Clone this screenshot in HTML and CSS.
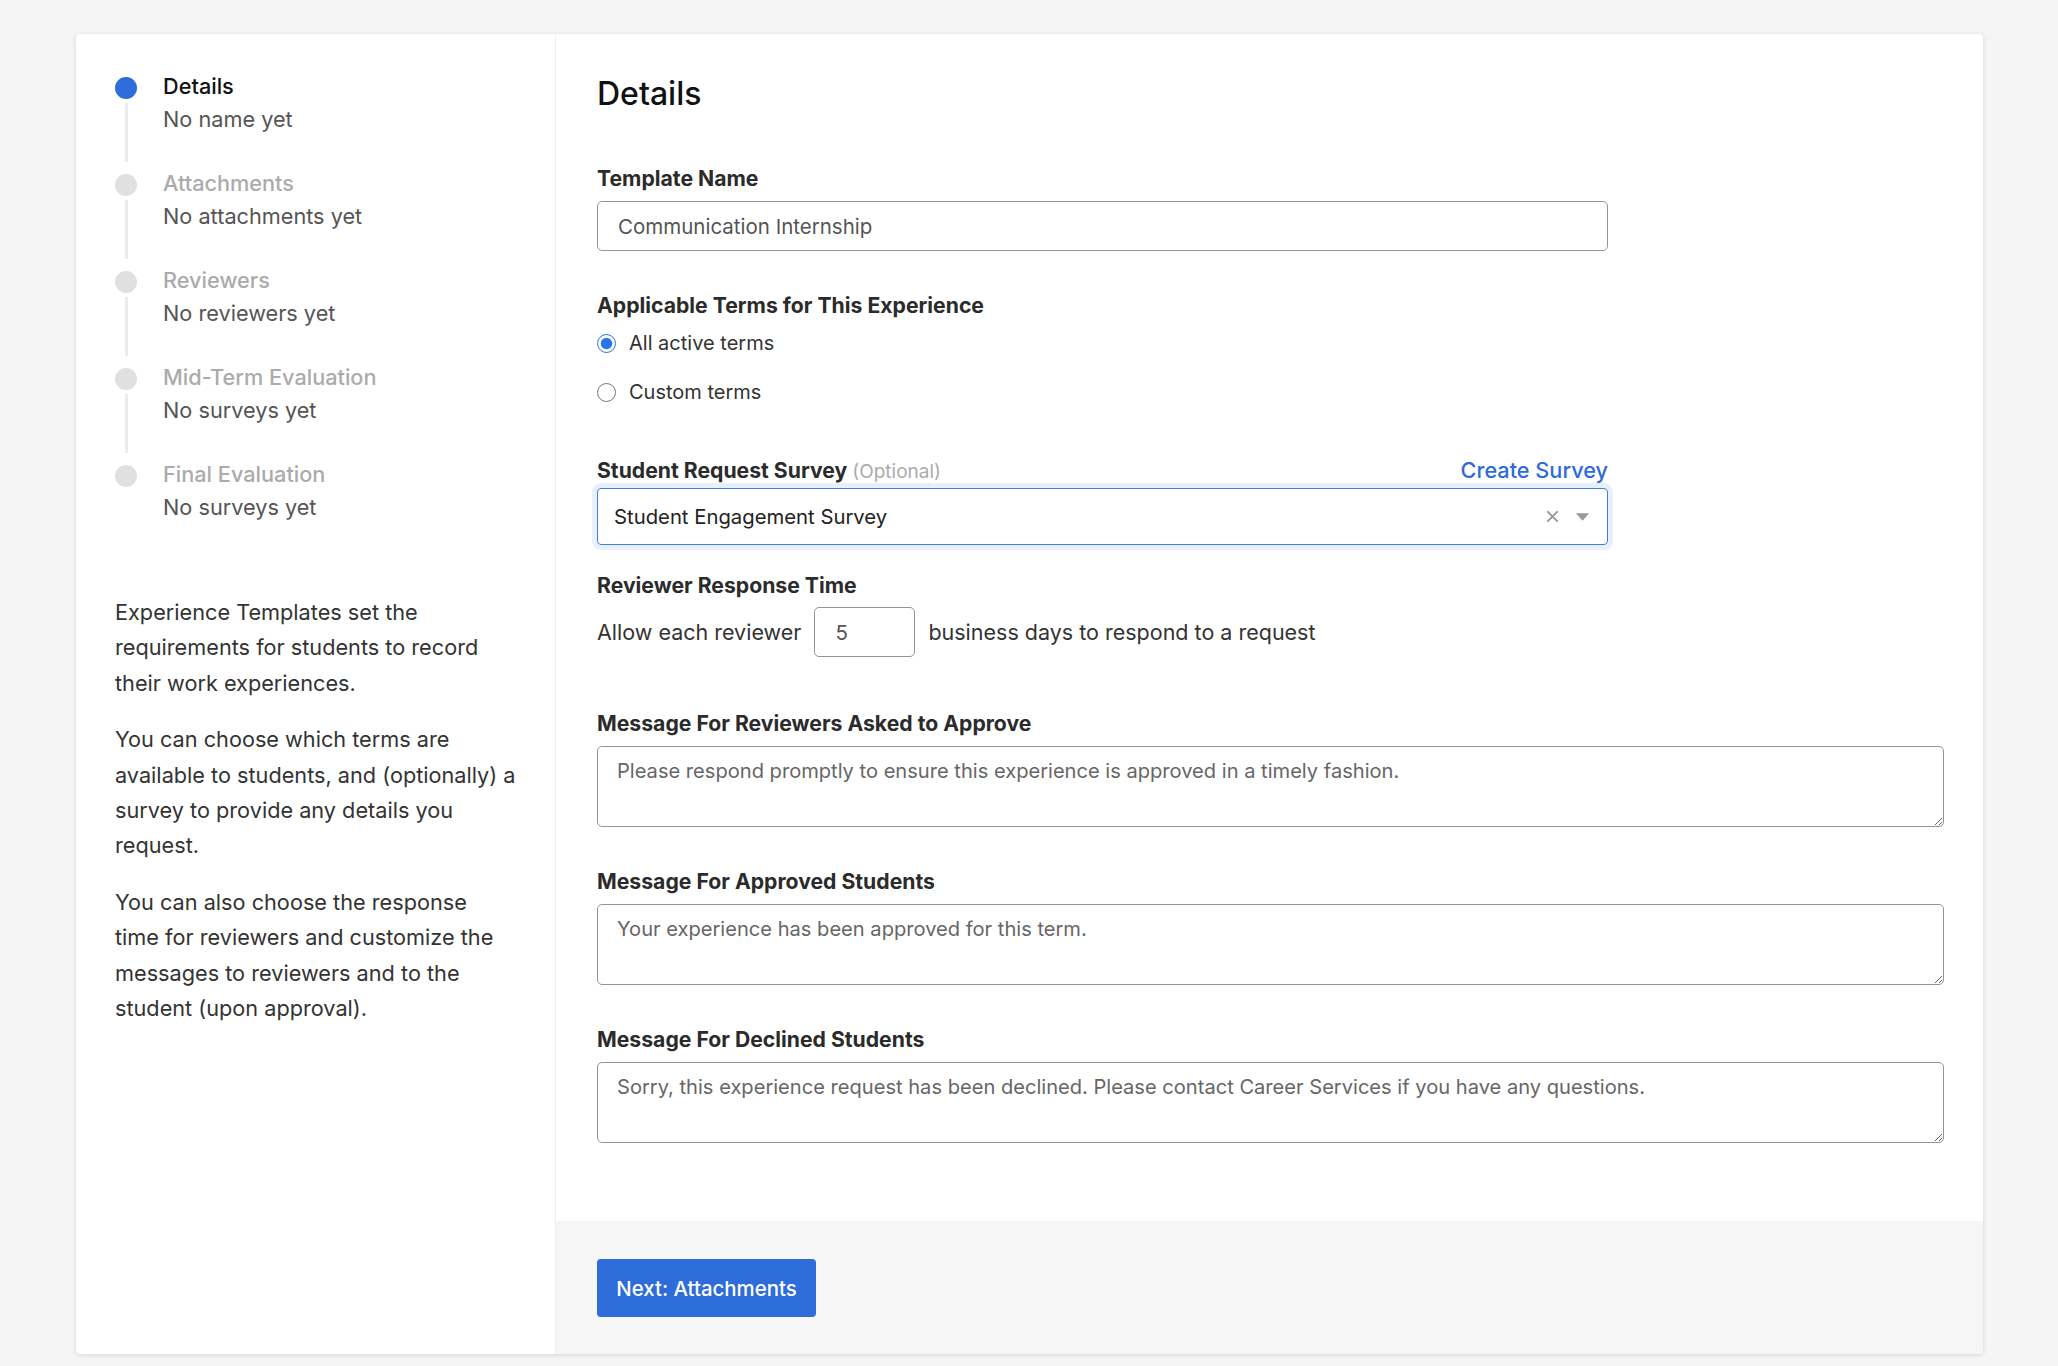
FILE: index.html
```html
<!DOCTYPE html>
<html lang="en">
<head>
<meta charset="utf-8">
<title>Experience Template – Details</title>
<link rel="stylesheet" href="styles.css">
</head>
<body>
<div class="card">
  <aside class="sidebar">
    <ol class="steps">
      <li class="step is-active">
        <div class="rail"><span class="dot"></span><span class="line"></span></div>
        <div class="step-text"><div class="step-title">Details</div><div class="step-sub">No name yet</div></div>
      </li>
      <li class="step">
        <div class="rail"><span class="dot"></span><span class="line"></span></div>
        <div class="step-text"><div class="step-title">Attachments</div><div class="step-sub">No attachments yet</div></div>
      </li>
      <li class="step">
        <div class="rail"><span class="dot"></span><span class="line"></span></div>
        <div class="step-text"><div class="step-title">Reviewers</div><div class="step-sub">No reviewers yet</div></div>
      </li>
      <li class="step">
        <div class="rail"><span class="dot"></span><span class="line"></span></div>
        <div class="step-text"><div class="step-title">Mid-Term Evaluation</div><div class="step-sub">No surveys yet</div></div>
      </li>
      <li class="step is-last">
        <div class="rail"><span class="dot"></span></div>
        <div class="step-text"><div class="step-title">Final Evaluation</div><div class="step-sub">No surveys yet</div></div>
      </li>
    </ol>
    <div class="about">
      <p>Experience Templates set the requirements for students to record their work experiences.</p>
      <p>You can choose which terms are available to students, and (optionally) a survey to provide any details you request.</p>
      <p>You can also choose the response time&nbsp;for reviewers and customize the messages to reviewers and to the student (upon approval).</p>
    </div>
  </aside>

  <main class="main">
    <div class="form">
      <h1 class="title">Details</h1>

      <div class="field field-first">
        <label class="field-label" for="tname">Template Name</label>
        <input class="text-input" id="tname" type="text" value="Communication Internship">
      </div>

      <div class="field">
        <div class="field-label label-terms">Applicable Terms for This Experience</div>
        <label class="radio-row"><input type="radio" name="terms" checked><span>All active terms</span></label>
        <label class="radio-row radio-second"><input type="radio" name="terms"><span>Custom terms</span></label>
      </div>

      <div class="field field-survey">
        <div class="label-row">
          <div class="field-label label-inline">Student Request Survey <span class="optional">(Optional)</span></div>
          <a class="link" href="#">Create Survey</a>
        </div>
        <div class="select">
          <span class="select-value">Student Engagement Survey</span>
          <span class="select-icons">
            <svg class="icon-clear" width="14" height="14" viewBox="0 0 14 14"><path d="M2 2 L12 12 M12 2 L2 12" stroke="#9a9a9a" stroke-width="2.2" stroke-linecap="round"/></svg>
            <svg class="icon-caret" width="16" height="8" viewBox="0 0 16 8"><path d="M1 0 H15 L8 8 Z" fill="#9a9a9a"/></svg>
          </span>
        </div>
      </div>

      <div class="field field-time">
        <div class="field-label label-time">Reviewer Response Time</div>
        <div class="time-row">
          <span>Allow each reviewer</span>
          <input class="num-input" type="text" value="5">
          <span>business days to respond to a request</span>
        </div>
      </div>

      <div class="field field-msg-first">
        <label class="field-label" for="m1">Message For Reviewers Asked to Approve</label>
        <textarea class="area" id="m1">Please respond promptly to ensure this experience is approved in a timely fashion.</textarea>
      </div>

      <div class="field">
        <label class="field-label" for="m2">Message For Approved Students</label>
        <textarea class="area" id="m2">Your experience has been approved for this term.</textarea>
      </div>

      <div class="field">
        <label class="field-label" for="m3">Message For Declined Students</label>
        <textarea class="area" id="m3">Sorry, this experience request has been declined. Please contact Career Services if you have any questions.</textarea>
      </div>
    </div>

    <footer class="footer">
      <button class="btn-primary" type="button">Next: Attachments</button>
    </footer>
  </main>
</div>
</body>
</html>
```

FILE: styles.css
```css
* { box-sizing: border-box; }

html, body { margin: 0; }

body {
  background: #f5f5f5;
  padding: 34px 75px 13px 76px;
  font-family: Inter, "Noto Sans", "Liberation Sans", sans-serif;
  color: #333;
}

.card {
  display: flex;
  background: #fff;
  border-radius: 4px;
  box-shadow: 0 1px 5px rgba(0, 0, 0, 0.13);
  overflow: hidden;
}

/* Sidebar */
.sidebar {
  width: 480px;
  flex: 0 0 480px;
  border-right: 1px solid #efefef;
  padding: 36px 30px 0 39px;
}

.steps {
  list-style: none;
  margin: 0;
  padding: 0;
}

.step {
  display: flex;
  height: 97px;
}

.step.is-last { height: 66px; }

.rail {
  width: 22px;
  flex: 0 0 22px;
  display: flex;
  flex-direction: column;
  align-items: center;
  padding-top: 7px;
  padding-bottom: 5px;
}

.dot {
  width: 22px;
  height: 22px;
  border-radius: 50%;
  background: #e0e0e0;
  flex: 0 0 22px;
}

.is-active .dot { background: #2d6cd9; }

.line {
  width: 3px;
  flex: 1 1 auto;
  margin-top: 4px;
  background: #ececec;
}

.step-text {
  margin-left: 26px;
  font-size: 21.7px;
  line-height: 33px;
}

.step-title {
  font-weight: 500;
  color: #ababab;
}

.is-active .step-title { color: #111; }

.step-sub { color: #555; }

.about {
  margin-top: 71px;
  font-size: 21.7px;
  line-height: 35.4px;
  color: #333;
}

.about p { margin: 0 0 21px; }

/* Main */
.main {
  flex: 1 1 auto;
  display: flex;
  flex-direction: column;
}

.form {
  padding: 42px 39px 78px 41px;
}

.title {
  margin: 0;
  font-size: 32px;
  line-height: 35px;
  font-weight: 500;
  color: #111;
}

.field { margin-top: 42px; }
.field-first { margin-top: 55px; }
.field-survey { margin-top: 52px; }
.field-time { margin-top: 28px; }
.field-msg-first { margin-top: 54px; }

.field-label {
  display: block;
  font-size: 21.2px;
  line-height: 24px;
  font-weight: 700;
  color: #2b2b2b;
  margin-bottom: 11px;
}

.label-terms { margin-bottom: 12px; }
.label-time { margin-bottom: 10px; }

.label-row {
  display: flex;
  justify-content: space-between;
  align-items: baseline;
  width: 1011px;
  height: 24px;
  margin-bottom: 6px;
}

.label-inline { margin-bottom: 0; }

.optional {
  font-size: 19px;
  font-weight: 400;
  color: #ababab;
}

.link {
  font-size: 21.7px;
  line-height: 24px;
  font-weight: 500;
  color: #2e6bd6;
  text-decoration: none;
}

.text-input {
  display: block;
  width: 1011px;
  height: 50px;
  border: 1px solid #949494;
  border-radius: 5px;
  padding: 0 20px;
  font-family: inherit;
  font-size: 20.5px;
  color: #555;
  background: #fff;
}

.radio-row {
  display: flex;
  align-items: center;
  height: 28px;
  font-size: 20px;
  color: #333;
}

.radio-second { margin-top: 21px; }

.radio-row input {
  margin: 0 13px 0 0;
  width: 19px;
  height: 19px;
  accent-color: #2a74ef;
}

.select {
  display: flex;
  align-items: center;
  justify-content: space-between;
  width: 1011px;
  height: 57px;
  border: 1px solid #3d7fe2;
  border-radius: 4px;
  box-shadow: 0 0 0 5px #e9f0fc;
  padding: 0 17px 0 16px;
  font-size: 20.3px;
  color: #222;
}

.select-icons {
  display: flex;
  align-items: center;
  gap: 16px;
}

.icon-clear { display: block; width: 13px; height: 13px; }
.icon-caret { display: block; width: 15px; height: 8px; }

.time-row {
  display: flex;
  align-items: center;
  gap: 13px;
  font-size: 21.5px;
  line-height: 24px;
  color: #333;
}

.num-input {
  width: 101px;
  height: 50px;
  border: 1px solid #949494;
  border-radius: 5px;
  padding: 0 20px;
  font-family: inherit;
  font-size: 20.5px;
  color: #555;
}

.area {
  display: block;
  width: 100%;
  height: 81px;
  border: 1px solid #949494;
  border-radius: 5px;
  padding: 9px 19px;
  font-family: inherit;
  font-size: 20.1px;
  line-height: 30px;
  color: #666;
  background: #fff;
}

.footer {
  background: #f6f6f6;
  height: 133px;
  padding: 38px 41px;
}

.btn-primary {
  width: 219px;
  height: 58px;
  border: 0;
  border-radius: 4px;
  background: #2e6cd9;
  color: #fff;
  font-family: inherit;
  font-size: 20.4px;
  font-weight: 500;
  padding: 0;
}
```
